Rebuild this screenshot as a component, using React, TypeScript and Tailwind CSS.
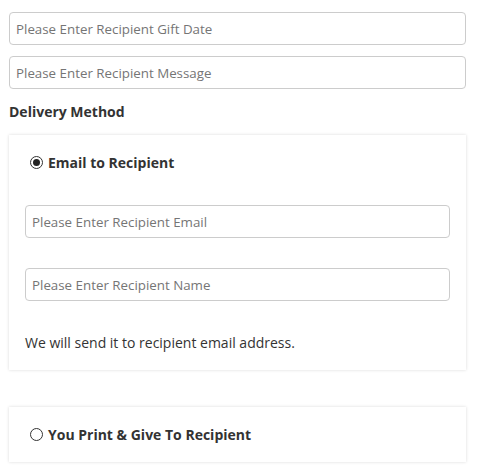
import React from "react";

function Radio({ checked }: { checked?: boolean }) {
  return (
    <span className="inline-flex h-[13px] w-[13px] shrink-0 items-center justify-center rounded-full border border-[#333] bg-white">
      {checked && <span className="h-[7px] w-[7px] rounded-full bg-[#222]" />}
    </span>
  );
}

function Field({ placeholder }: { placeholder: string }) {
  return (
    <input
      placeholder={placeholder}
      className="block h-[33px] w-full rounded-[4px] border border-[#cccccc] bg-white px-[6px] text-[13.333px] text-[#333] outline-none placeholder:text-[#757575]"
    />
  );
}

export default function App() {
  return (
    <div
      className="min-h-[474px] bg-white pl-[9px] pr-[12px] pt-[12px] text-[#333]"
      style={{ fontFamily: '"Open Sans", "Noto Sans", sans-serif' }}
    >
      <div className="flex flex-col gap-[11px]">
        <Field placeholder="Please Enter Recipient Gift Date" />
        <Field placeholder="Please Enter Recipient Message" />
      </div>
      <div className="mt-[13px] text-[14px] font-bold leading-[20px]">Delivery Method</div>
      <div className="mt-[13px] bg-white px-[16px] pb-[17px] pt-[17px] shadow-[0_0_3px_rgba(0,0,0,0.15)]">
        <label className="flex h-[20px] items-center gap-[5px] pl-[5px] text-[14px] font-bold">
          <Radio checked />
          <span>Email to Recipient</span>
        </label>
        <div className="mt-[33px]">
          <Field placeholder="Please Enter Recipient Email" />
        </div>
        <div className="mt-[30px]">
          <Field placeholder="Please Enter Recipient Name" />
        </div>
        <p className="mt-[32px] text-[14px] leading-[20px]">We will send it to recipient email address.</p>
      </div>
      <div className="mt-[37px] bg-white px-[16px] pb-[18px] pt-[17px] shadow-[0_0_3px_rgba(0,0,0,0.15)]">
        <label className="flex h-[20px] items-center gap-[5px] pl-[5px] text-[14px] font-bold">
          <Radio />
          <span>You Print &amp; Give To Recipient</span>
        </label>
      </div>
    </div>
  );
}
